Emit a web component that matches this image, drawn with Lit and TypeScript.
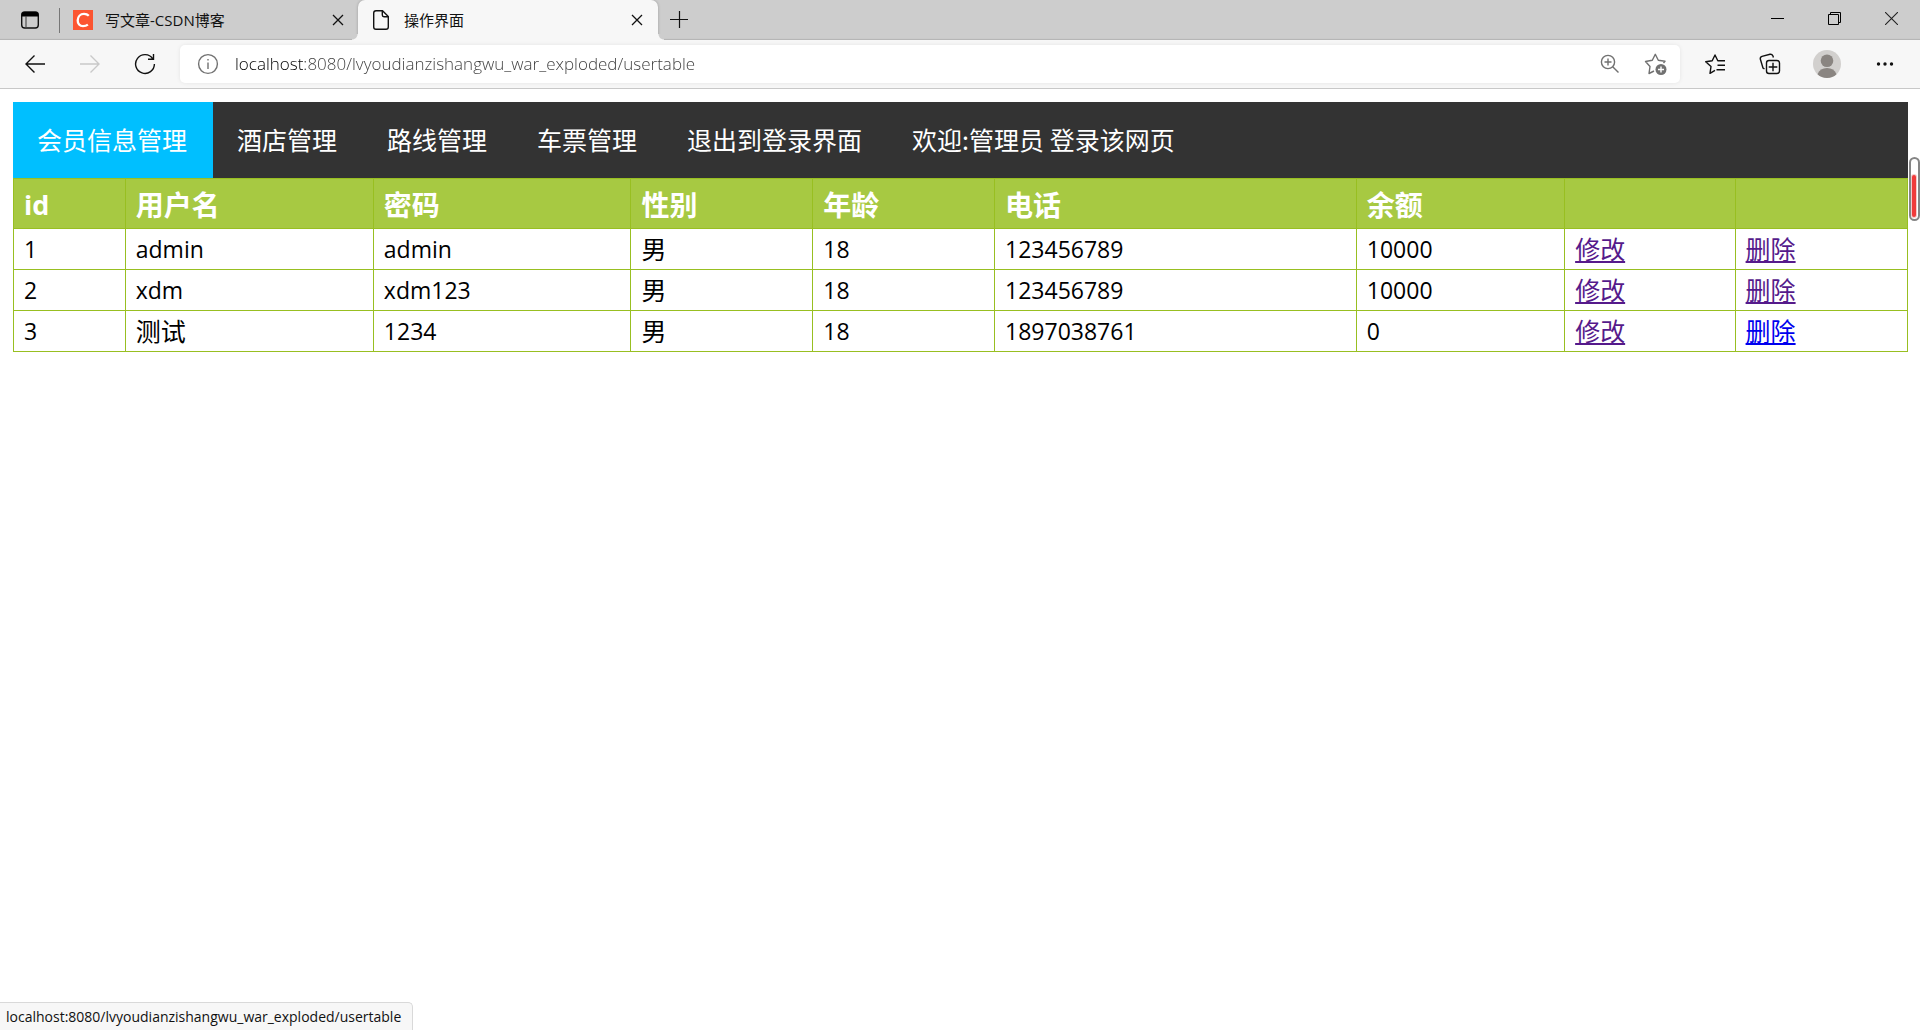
import { LitElement, html, css, svg } from "lit";
import { customElement, property } from "lit/decorators.js";
import { classMap } from "lit/directives/class-map.js";

const ADDRESS = "localhost:8080/lvyoudianzishangwu_war_exploded/usertable";

interface Member {
  id: string;
  name: string;
  password: string;
  gender: string;
  age: string;
  phone: string;
  balance: string;
  deleteVisited: boolean;
}

const MEMBERS: Member[] = [
  { id: "1", name: "admin", password: "admin", gender: "男", age: "18", phone: "123456789", balance: "10000", deleteVisited: true },
  { id: "2", name: "xdm", password: "xdm123", gender: "男", age: "18", phone: "123456789", balance: "10000", deleteVisited: true },
  { id: "3", name: "测试", password: "1234", gender: "男", age: "18", phone: "1897038761", balance: "0", deleteVisited: false },
];

const NAV = ["会员信息管理", "酒店管理", "路线管理", "车票管理", "退出到登录界面", "欢迎:管理员 登录该网页"];
const HEADINGS = ["id", "用户名", "密码", "性别", "年龄", "电话", "余额", "", ""];
const COLUMNS = ["id", "name", "password", "gender", "age", "phone", "balance", "edit", "remove"];

const closeGlyph = svg`<path d="M1 1L11 11M11 1L1 11" stroke="#111" stroke-width="1.3" fill="none"/>`;

@customElement("tab-strip")
export class TabStrip extends LitElement {
  static styles = css`
    :host {
      display: flex;
      height: 40px;
      background: #cdcdcd;
      box-shadow: inset 0 -2px 1px -1px #b4b4b4;
      font: 15px/20px "Open Sans", "Noto Sans CJK SC", sans-serif;
      color: #111;
    }
    button {
      display: flex;
      align-items: center;
      justify-content: center;
      padding: 0;
      border: 0;
      background: none;
      font: inherit;
      color: inherit;
    }
    svg {
      display: block;
      flex: none;
    }
    .actions {
      width: 59px;
    }
    .divider {
      width: 1px;
      height: 25px;
      margin-top: 8px;
      background: #777;
    }
    .tab {
      display: flex;
      align-items: center;
      box-sizing: border-box;
      width: 298px;
      padding: 0 9px 0 13px;
    }
    .tab.active {
      position: relative;
      width: 300px;
      padding: 0 10px 0 14px;
      border-radius: 7px 7px 0 0;
      background: #f7f7f7;
      box-shadow: 0 0 3px rgba(0, 0, 0, 0.25);
      clip-path: inset(0 -6px 0 -6px);
    }
    .tab.active::before,
    .tab.active::after {
      content: "";
      position: absolute;
      bottom: 0;
      width: 6px;
      height: 6px;
    }
    .tab.active::before {
      left: -6px;
      background: radial-gradient(circle at 0 0, #cdcdcd 5px, #f7f7f7 6px);
    }
    .tab.active::after {
      right: -6px;
      background: radial-gradient(circle at 100% 0, #cdcdcd 5px, #f7f7f7 6px);
    }
    .title {
      flex: 1;
      justify-content: flex-start;
      gap: 12px;
      height: 40px;
    }
    .close {
      width: 22px;
      height: 22px;
    }
    .add {
      width: 42px;
    }
    .window {
      display: flex;
      margin-left: auto;
    }
    .window button {
      width: 57px;
      height: 36px;
    }
  `;

  render() {
    return html`
      <button class="actions" aria-label="Tab actions">
        <svg width="20" height="20" viewBox="0 0 20 20">
          <rect x="1.7" y="2" width="16.6" height="16" rx="3" fill="none" stroke="#111" stroke-width="1.4" />
          <path d="M1.7 6.5V4.5Q1.7 2 4.5 2H15.500Q18.300 2 18.300 4.500V6.500Z" fill="#000" />
          <path d="M6 6V18" stroke="#444" stroke-width="1.1" />
        </svg>
      </button>
      <span class="divider"></span>
      <div class="tab">
        <button class="title">
          <svg width="20" height="20" viewBox="0 0 20 20">
            <rect width="20" height="20" fill="#fc5531" />
            <path d="M15.800 5.800Q14 3.900 11 3.900C7.200 3.900 4.900 6.700 4.700 10.200C4.600 13.700 6.800 16.100 10 16.100Q12.900 16.100 14.900 14.600" fill="none" stroke="#fff" stroke-width="2.300" />
          </svg>
          <span>写文章-CSDN博客</span>
        </button>
        <button class="close" aria-label="Close tab"><svg width="12" height="12" viewBox="0 0 12 12">${closeGlyph}</svg></button>
      </div>
      <div class="tab active">
        <button class="title">
          <svg width="20" height="22" viewBox="0 0 20 22">
            <path d="M4 1.700H10.500L16.300 7.500V18Q16.300 20.300 14 20.300H4Q1.700 20.300 1.700 18V4Q1.700 1.700 4 1.700ZM10.300 2V6Q10.300 7.700 12 7.700H16" fill="none" stroke="#111" stroke-width="1.400" />
          </svg>
          <span>操作界面</span>
        </button>
        <button class="close" aria-label="Close tab"><svg width="12" height="12" viewBox="0 0 12 12">${closeGlyph}</svg></button>
      </div>
      <button class="add" aria-label="New tab">
        <svg width="18" height="20" viewBox="0 0 18 20"><path d="M0 9.500H18M9.500 1V18" stroke="#111" stroke-width="1.200" /></svg>
      </button>
      <div class="window">
        <button aria-label="Minimize"><svg width="13" height="13" viewBox="0 0 13 13"><path d="M0 6.500H13" stroke="#000" /></svg></button>
        <button aria-label="Restore"><svg width="13" height="13" viewBox="0 0 13 13"><path d="M.5 2.500H10.500V12.500H.5ZM2.500 2.500V.5H12.500V10.500H10.500" fill="none" stroke="#000" /></svg></button>
        <button aria-label="Close window"><svg width="13" height="13" viewBox="0 0 13 13"><path d="M0 0L13 13M13 0L0 13" stroke="#222" stroke-width="1.100" /></svg></button>
      </div>
    `;
  }
}

@customElement("tool-bar")
export class ToolBar extends LitElement {
  static styles = css`
    :host {
      display: flex;
      align-items: center;
      height: 48px;
      padding: 0 8px 0 7px;
      background: #f7f7f7;
      border-bottom: 1px solid #c8c8c8;
    }
    button {
      display: flex;
      align-items: center;
      justify-content: center;
      width: 55px;
      height: 38px;
      padding: 0;
      border: 0;
      background: none;
    }
    svg {
      display: block;
      fill: none;
      stroke: #111;
      stroke-width: 1.4;
    }
    .address {
      display: flex;
      flex: 1;
      align-items: center;
      height: 38px;
      margin: 0 7px 0 8px;
      padding-right: 1px;
      border-radius: 5px;
      background: #fff;
      box-shadow: 0 0 4px rgba(0, 0, 0, 0.08);
    }
    .address button {
      width: 46px;
    }
    .address svg {
      stroke: #717171;
    }
    .address .info {
      width: 55px;
    }
    input {
      flex: 1;
      min-width: 0;
      height: 34px;
      padding: 0 0 2px;
      border: 0;
      outline: 0;
      font: 300 17px/24px "Open Sans", sans-serif;
      color: transparent;
      background: linear-gradient(90deg, #000 70px, #3c3c3c 70px);
      -webkit-background-clip: text;
      background-clip: text;
    }
    svg.off {
      stroke: #c9c9c9;
    }
    .profile {
      width: 60px;
    }
  `;

  render() {
    return html`
      <button aria-label="Back"><svg width="22" height="20" viewBox="0 0 22 20"><path d="M21 10H2M10.500 1.500L2 10L10.500 18.500" /></svg></button>
      <button aria-label="Forward" disabled><svg class="off" width="22" height="20" viewBox="0 0 22 20"><path d="M1 10H20M11.500 1.500L20 10L11.500 18.500" /></svg></button>
      <button aria-label="Refresh"><svg width="22" height="22" viewBox="0 0 22 22"><path d="M18.800 5.800A9.400 9.400 0 1 0 20.400 11M19.500 1V6.300H14" /></svg></button>
      <div class="address">
        <button class="info" aria-label="Site information">
          <svg width="22" height="22" viewBox="0 0 22 22"><circle cx="11" cy="11" r="9.400" /><path d="M11 9.500V16M11 6V7.600" /></svg>
        </button>
        <input type="text" aria-label="Address" .value=${ADDRESS} spellcheck="false" />
        <button aria-label="Zoom">
          <svg width="20" height="20" viewBox="0 0 20 20"><circle cx="8" cy="8" r="6.600" /><path d="M12.700 12.700L18.500 18.500M4.500 8H11.500M8 4.500V11.500" /></svg>
        </button>
        <button aria-label="Add to favorites">
          <svg width="24" height="24" viewBox="0 0 24 24">
            <path d="M10 19L5 21.500 6 14.500 1.500 9.500 8.300 8.300 11.300 2.300 14.300 8.300 21 9.300 19.500 11" stroke-linejoin="round" />
            <circle cx="17" cy="17.500" r="5.500" fill="#717171" stroke="none" />
            <path d="M17 14.500V20.500M14 17.500H20" stroke="#fff" />
          </svg>
        </button>
      </div>
      <button aria-label="Favorites">
        <svg width="22" height="22" viewBox="0 0 22 22">
          <path d="M11 17.300L6 20.300 7 13.500 1.700 8.800 8.200 7.700 11 2 13.800 7.700 21 7.700M13.500 12.200H21M12.500 16.700H21" stroke-linejoin="round" />
        </svg>
      </button>
      <button aria-label="Collections">
        <svg width="22" height="22" viewBox="0 0 22 22">
          <path d="M5.500 16L4 15 1.300 6Q1 4 3 3.300L11 1.300Q13 1 14 3L14.400 4.500" />
          <rect x="7.500" y="7.500" width="13" height="13" rx="2.500" />
          <path d="M14 9.700V18.300M9.700 14H18.300" />
        </svg>
      </button>
      <button class="profile" aria-label="Profile">
        <svg width="28" height="28" viewBox="0 0 28 28">
          <circle cx="14" cy="14" r="14" fill="#d2d0ce" stroke="none" />
          <circle cx="14" cy="10.700" r="6.300" fill="#8a8581" stroke="none" />
          <path d="M4.500 24.200Q7 18 14 18T23.500 24.200Q19.500 28 14 28T4.500 24.200Z" fill="#8a8581" stroke="none" />
        </svg>
      </button>
      <button aria-label="Settings and more">
        <svg width="18" height="6" viewBox="0 0 18 6">
          <g fill="#111" stroke="none"><circle cx="2.500" cy="3" r="1.700" /><circle cx="9" cy="3" r="1.700" /><circle cx="15.500" cy="3" r="1.700" /></g>
        </svg>
      </button>
    `;
  }
}

@customElement("site-nav")
export class SiteNav extends LitElement {
  @property({ type: Number }) current = 0;

  static styles = css`
    :host {
      display: block;
    }
    ul {
      display: flex;
      margin: 0;
      padding: 0;
      list-style: none;
      background: #333;
    }
    a {
      display: block;
      padding: 19px 26px 21px 24px;
      font: 25px/36px "Noto Sans CJK SC", sans-serif;
      color: #fff;
      text-decoration: none;
    }
    .active {
      background: #00bfff;
    }
  `;

  render() {
    return html`<nav>
      <ul>
        ${NAV.map((label, i) => html`<li><a href="#" class=${classMap({ active: i === this.current })}>${label}</a></li>`)}
      </ul>
    </nav>`;
  }
}

@customElement("member-table")
export class MemberTable extends LitElement {
  @property({ attribute: false }) members: Member[] = [];

  static styles = css`
    :host {
      display: block;
    }
    table {
      width: 100%;
      table-layout: fixed;
      border-collapse: collapse;
      color: #000;
      font: 23px/32px "Open Sans", "Noto Sans CJK SC", sans-serif;
    }
    th,
    td {
      padding: 4px 10px;
      border: 1px solid #98bf21;
      text-align: left;
      height: 32px;
    }
    th {
      padding: 8px 10px 5px;
      background: #a7c942;
      color: #fff;
      font-size: 28px;
      line-height: 36px;
      height: 36px;
    }
    th.latin {
      font-size: 27px;
    }
    td.han {
      font-size: 25px;
    }
    a {
      color: #00e;
    }
    a.visited {
      color: #551a8b;
    }
    .id {
      width: 5.9%;
    }
    .name {
      width: 13.1%;
    }
    .password {
      width: 13.6%;
    }
    .gender,
    .age {
      width: 9.6%;
    }
    .phone {
      width: 19.1%;
    }
    .balance {
      width: 11%;
    }
    .edit {
      width: 9%;
    }
  `;

  private cell(text: string) {
    return html`<td class=${classMap({ han: /[\u4e00-\u9fff]/.test(text) })}>${text}</td>`;
  }

  render() {
    return html`<table>
      <colgroup>
        ${COLUMNS.map((name) => html`<col class=${name} />`)}
      </colgroup>
      <thead>
        <tr>
          ${HEADINGS.map((text) => html`<th class=${classMap({ latin: text === "id" })}>${text}</th>`)}
        </tr>
      </thead>
      <tbody>
        ${this.members.map(
          (m) => html`<tr>
            ${[m.id, m.name, m.password, m.gender, m.age, m.phone, m.balance].map((t) => this.cell(t))}
            <td class="han"><a class="visited" href="#">修改</a></td>
            <td class="han"><a class=${classMap({ visited: m.deleteVisited })} href="#">删除</a></td>
          </tr>`
        )}
      </tbody>
    </table>`;
  }
}

@customElement("app-root")
export class AppRoot extends LitElement {
  static styles = css`
    :host {
      display: block;
      position: relative;
      min-height: 100vh;
      background: #fff;
      overflow: hidden;
    }
    main {
      padding: 13px 12px 13px 13px;
    }
    .status {
      position: absolute;
      left: 0;
      bottom: 0;
      padding: 3px 11px 3px 6px;
      border: 1px solid #d9d9d9;
      border-width: 1px 1px 0 0;
      border-radius: 0 5px 0 0;
      background: #f7f7f7;
      color: #111;
      font: 14px/21px "Open Sans", sans-serif;
    }
    .gauge {
      position: absolute;
      top: 157px;
      right: 0;
      display: flex;
      align-items: flex-end;
      box-sizing: border-box;
      width: 11px;
      height: 64px;
      padding: 2px 2px 2px 1px;
      border: 2px solid #858585;
      border-radius: 6px;
      background: #fff;
    }
    .level {
      flex: 1;
      height: 42px;
      border-radius: 2px;
      background: #f03a3a;
      box-shadow: 0 0 0 1px #f3caca;
    }
  `;

  render() {
    return html`
      <tab-strip></tab-strip>
      <tool-bar></tool-bar>
      <main>
        <site-nav></site-nav>
        <member-table .members=${MEMBERS}></member-table>
      </main>
      <div class="gauge"><div class="level"></div></div>
      <div class="status">${ADDRESS}</div>
    `;
  }
}
